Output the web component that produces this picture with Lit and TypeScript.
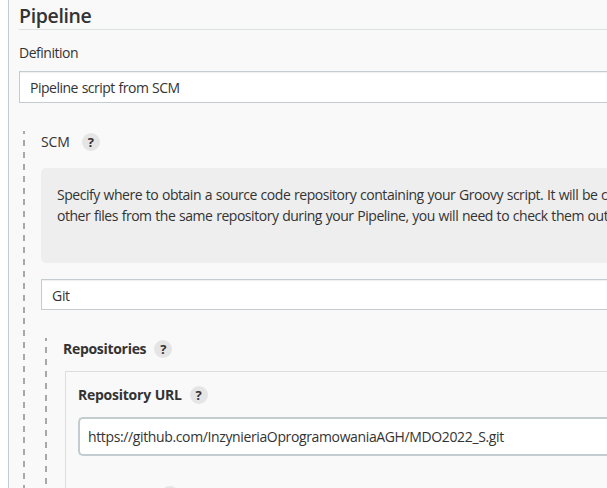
import { LitElement, html, css } from "lit";
import { customElement, property } from "lit/decorators.js";

@customElement("help-button")
class HelpButton extends LitElement {
  static styles = css`
    :host {
      display: block;
      flex: none;
      width: 18px;
      height: 18px;
      border-radius: 50%;
      background: #e5e5e5;
      color: #333;
      font: 700 13px/18px "Open Sans", "Noto Sans", sans-serif;
      letter-spacing: 0;
      text-align: center;
    }
  `;
  render() {
    return html`?`;
  }
}

@customElement("select-box")
class SelectBox extends LitElement {
  @property() value = "";
  static styles = css`
    :host {
      display: flex;
      align-items: center;
      box-sizing: border-box;
      height: 32px;
      padding: 0 10px;
      border: 1px solid #c3cdd0;
      border-right: 0;
      background: #fff;
      box-shadow: inset 0 1px 1px #f0f0f0;
      white-space: nowrap;
    }
  `;
  render() {
    return html`<span>${this.value}</span>`;
  }
}

@customElement("app-root")
class AppRoot extends LitElement {
  static styles = css`
    :host {
      display: block;
      box-sizing: border-box;
      height: 488px;
      padding-left: 8px;
      overflow: hidden;
      background: #fff;
      color: #333;
      font: 14px/21px "Open Sans", "Noto Sans", sans-serif;
      letter-spacing: -0.49px;
      word-spacing: 0.5px;
    }
    .section {
      box-sizing: border-box;
      height: 488px;
      padding-left: 10px;
      border-left: 1px solid #c3cdd0;
      background: #f9f9f9;
      overflow: hidden;
    }
    .title {
      box-sizing: border-box;
      height: 30px;
      margin: 0;
      padding-top: 2px;
      border-bottom: 1px solid #dbe0e0;
      font-size: 19.5px;
      font-weight: 600;
      line-height: 28px;
      letter-spacing: -0.35px;
    }
    .label {
      display: flex;
      align-items: center;
      height: 21px;
      white-space: nowrap;
    }
    .definition {
      margin: 12px 0 8px;
    }
    .group {
      display: grid;
      grid-template-columns: 2px minmax(0, 1fr);
      column-gap: 16px;
      margin: 28px 0 0 4px;
    }
    .rail {
      background:
        linear-gradient(#a8a8a8, #a8a8a8) 0 0 / 2px 3px no-repeat,
        repeating-linear-gradient(#a8a8a8 0 6px, transparent 6px 11.9px) 0 9px / 2px 100% no-repeat;
    }
    .scm {
      letter-spacing: -0.1px;
    }
    .scm help-button {
      margin-left: 12px;
    }
    .help {
      box-sizing: border-box;
      height: 95px;
      margin: 16px 0;
      padding: 16px 0 0 16px;
      border-radius: 5px 0 0 5px;
      background: #eee;
      letter-spacing: -0.46px;
      white-space: nowrap;
    }
    .scm-select {
      height: 31px;
      padding-top: 2px;
      letter-spacing: -0.3px;
    }
    .bold {
      font-weight: 700;
      letter-spacing: -0.3px;
    }
    .repositories help-button {
      margin-left: 8px;
    }
    .url-label {
      letter-spacing: -0.25px;
    }
    .url-label help-button {
      margin-left: 8px;
    }
    .card {
      box-sizing: border-box;
      height: 130px;
      margin: 12px 0 0 2px;
      padding: 12px 0 0 12px;
      border: solid #dcdfe0;
      border-width: 1px 0 0 1px;
    }
    .field {
      display: flex;
      align-items: center;
      box-sizing: border-box;
      height: 39px;
      margin: 12px 0 30px;
      padding: 0 8px;
      border: 2px solid #c3cdd0;
      border-right: 0;
      border-radius: 5px 0 0 5px;
      background: #fff;
      letter-spacing: -0.37px;
      white-space: nowrap;
    }
    .next help-button {
      margin-left: 83px;
    }
  `;
  render() {
    return html`
      <main class="section">
        <h1 class="title">Pipeline</h1>
        <div class="label definition">Definition</div>
        <select-box value="Pipeline script from SCM"></select-box>
        <div class="group">
          <div class="rail"></div>
          <div>
            <div class="label scm"><span>SCM</span><help-button></help-button></div>
            <div class="help">
              <div>Specify where to obtain a source code repository containing your Groovy script. It will be c</div>
              <div>other files from the same repository during your Pipeline, you will need to check them out</div>
            </div>
            <select-box class="scm-select" value="Git"></select-box>
            <div class="group">
              <div class="rail"></div>
              <div>
                <div class="label bold repositories"><span>Repositories</span><help-button></help-button></div>
                <div class="card">
                  <div class="label bold url-label"><span>Repository URL</span><help-button></help-button></div>
                  <div class="field"><span>https://github.com/InzynieriaOprogramowaniaAGH/MDO2022_S.git</span></div>
                  <div class="next"><help-button></help-button></div>
                </div>
              </div>
            </div>
          </div>
        </div>
      </main>
    `;
  }
}
